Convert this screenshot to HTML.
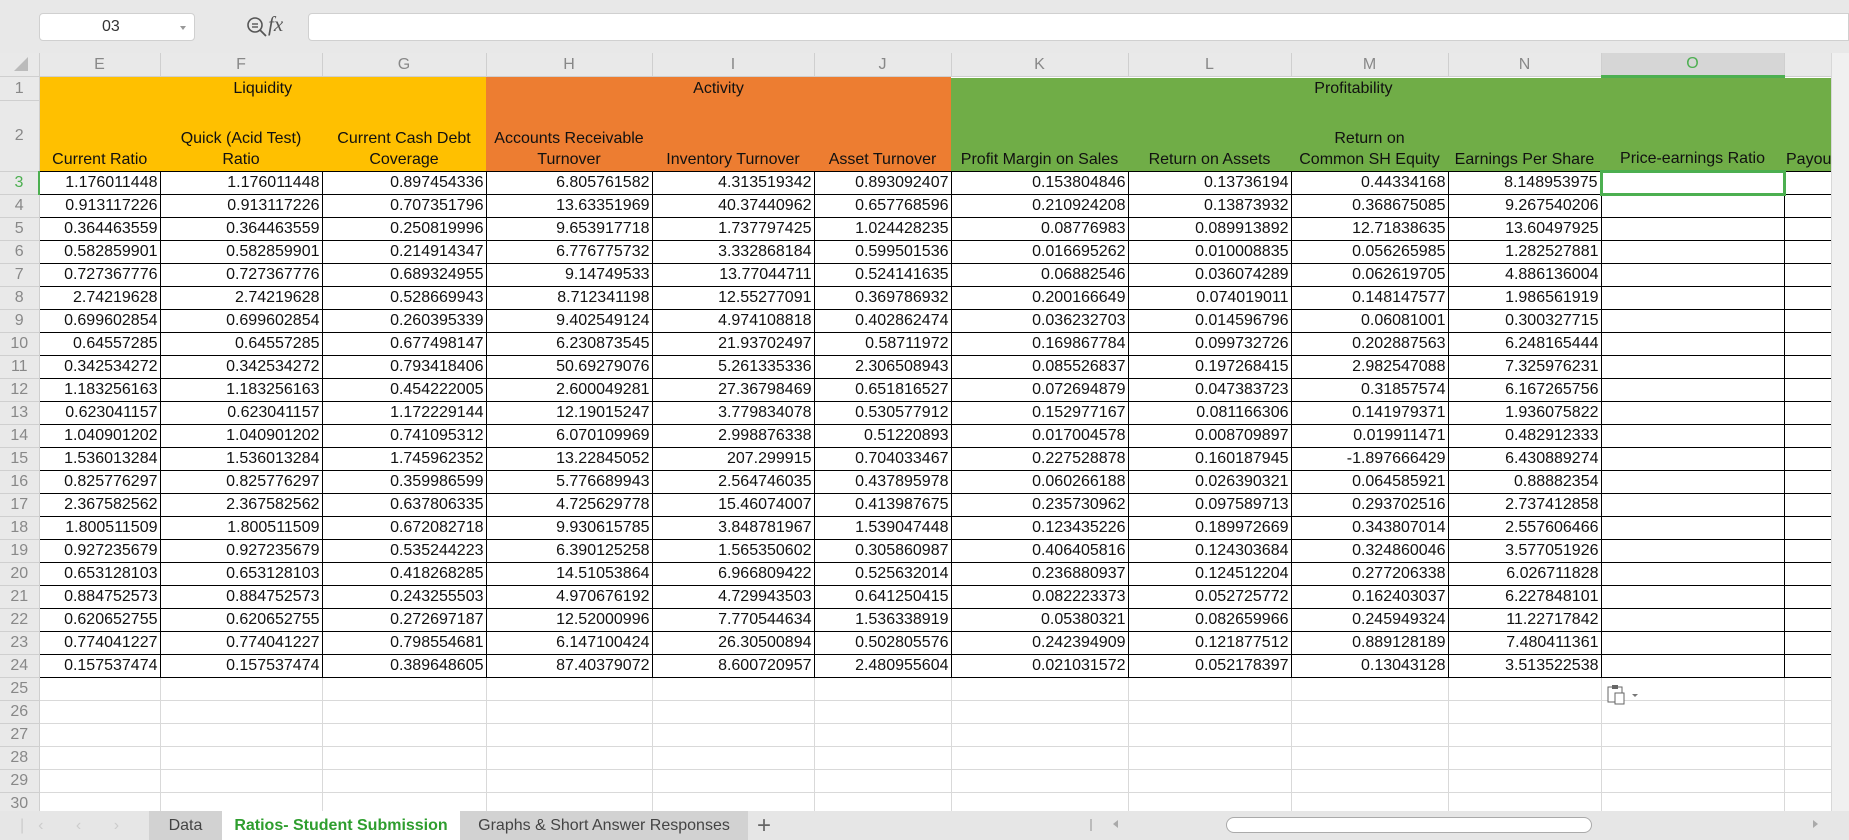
<!DOCTYPE html>
<html><head><meta charset="utf-8">
<style>
*{box-sizing:border-box;margin:0;padding:0}
body{width:1849px;height:840px;overflow:hidden;background:#fff;font-family:"Liberation Sans","Noto Sans CJK SC",sans-serif;position:relative}
.top{position:absolute;left:0;top:0;width:1849px;height:53px;background:#e8e8e8}
.name{position:absolute;left:39px;top:13px;width:156px;height:28px;background:#fff;border:1px solid #d0d0d0;border-radius:4px;font-size:16px;color:#333;line-height:26px;padding-left:62px}
.name:after{content:"";position:absolute;right:8px;top:12px;border:3px solid transparent;border-top:4px solid #999}
.fxin{position:absolute;left:308px;top:13px;width:1541px;height:28px;background:#fff;border:1px solid #d0d0d0;border-radius:4px 0 0 4px}
.fx{position:absolute;left:268px;top:12px;font-family:"Liberation Serif",serif;font-style:italic;font-size:21px;color:#555}
table{position:absolute;left:0;top:53px;border-collapse:collapse;table-layout:fixed}
td{font-size:16px;color:#111;overflow:hidden;white-space:nowrap;padding:0 2px;height:23px;line-height:22px}
tr.ch td{height:23px;background:#e9e9e9;color:#888;text-align:center;font-size:16px;border-right:1px solid #cfcfcf;border-bottom:1px solid #cfcfcf}
td.rh{background:#e9e9e9;color:#888;text-align:center;font-size:16px;border-bottom:1px solid #cfcfcf;border-right:1px solid #cfcfcf;padding:0}
tr.d td.n{text-align:right;border:1px solid #000;letter-spacing:0}
tr.d td.e{border:1px solid #000}
tr.b td.g{border-right:1px solid #d9d9d9;border-bottom:1px solid #d9d9d9}
.y{background:#ffc000}.o{background:#ed7d31}.gr{background:#70ad47}
tr.h2 td{vertical-align:bottom;text-align:center;font-size:16px;line-height:21px;white-space:normal;padding-bottom:1px;border-bottom:1px solid #000}
.tabs{position:absolute;left:0;top:811px;width:1849px;height:29px;background:#e6e6e6}
.tab{position:absolute;top:0;height:29px;font-size:16px;line-height:29px;text-align:center;color:#444}
</style></head><body>
<div class="top">
<div class="name">03</div>
<svg style="position:absolute;left:246px;top:16px" width="22" height="22"><circle cx="9" cy="9" r="7" fill="none" stroke="#555" stroke-width="1.6"/><line x1="14" y1="14" x2="20" y2="20" stroke="#555" stroke-width="1.8"/><line x1="6" y1="8" x2="12" y2="8" stroke="#555" stroke-width="1.4"/><line x1="6" y1="11" x2="12" y2="11" stroke="#555" stroke-width="1.4"/></svg>
<div class="fx">fx</div>
<div class="fxin"></div>
</div>
<table>
<colgroup><col style="width:39px"><col style="width:121px"><col style="width:162px"><col style="width:164px"><col style="width:166px"><col style="width:162px"><col style="width:137px"><col style="width:177px"><col style="width:163px"><col style="width:157px"><col style="width:153px"><col style="width:183px"><col style="width:47px"></colgroup>
<tr class="ch"><td style="position:relative"><svg width="20" height="16" style="position:absolute;left:12px;top:4px"><polygon points="16,0 16,14 2,14" fill="#bbb"/></svg></td><td>E</td><td>F</td><td>G</td><td>H</td><td>I</td><td>J</td><td>K</td><td>L</td><td>M</td><td>N</td><td style="background:#d6d6d6;color:#4caf50;border-bottom:3px solid #4caf50">O</td><td></td></tr>
<tr style="height:24px"><td class="rh">1</td><td class="y" colspan="3" style="text-align:center;font-size:16px">Liquidity</td><td class="o" colspan="3" style="text-align:center;font-size:16px">Activity</td><td class="gr" colspan="6" style="text-align:center;font-size:16px;padding-right:84px">Profitability</td></tr>
<tr class="h2" style="height:71px"><td class="rh" style="vertical-align:middle;text-align:center;border-bottom:1px solid #cfcfcf">2</td><td class="y">Current Ratio</td><td class="y">Quick (Acid Test) Ratio</td><td class="y">Current Cash Debt Coverage</td><td class="o">Accounts Receivable Turnover</td><td class="o">Inventory Turnover</td><td class="o">Asset Turnover</td><td class="gr">Profit Margin on Sales</td><td class="gr">Return on Assets</td><td class="gr">Return on<br>Common SH Equity</td><td class="gr">Earnings Per Share</td><td class="gr">Price-earnings Ratio</td><td class="gr" style="text-align:left">Payout</td></tr>
<tr class="d"><td class="rh" style="color:#4caf50;border-left:0;border-right:2px solid #4caf50">3</td><td class="n">1.176011448</td><td class="n">1.176011448</td><td class="n">0.897454336</td><td class="n">6.805761582</td><td class="n">4.313519342</td><td class="n">0.893092407</td><td class="n">0.153804846</td><td class="n">0.13736194</td><td class="n">0.44334168</td><td class="n">8.148953975</td><td class="e" style="border:3px solid #4caf50"></td><td class="e"></td></tr>
<tr class="d"><td class="rh">4</td><td class="n">0.913117226</td><td class="n">0.913117226</td><td class="n">0.707351796</td><td class="n">13.63351969</td><td class="n">40.37440962</td><td class="n">0.657768596</td><td class="n">0.210924208</td><td class="n">0.13873932</td><td class="n">0.368675085</td><td class="n">9.267540206</td><td class="e"></td><td class="e"></td></tr>
<tr class="d"><td class="rh">5</td><td class="n">0.364463559</td><td class="n">0.364463559</td><td class="n">0.250819996</td><td class="n">9.653917718</td><td class="n">1.737797425</td><td class="n">1.024428235</td><td class="n">0.08776983</td><td class="n">0.089913892</td><td class="n">12.71838635</td><td class="n">13.60497925</td><td class="e"></td><td class="e"></td></tr>
<tr class="d"><td class="rh">6</td><td class="n">0.582859901</td><td class="n">0.582859901</td><td class="n">0.214914347</td><td class="n">6.776775732</td><td class="n">3.332868184</td><td class="n">0.599501536</td><td class="n">0.016695262</td><td class="n">0.010008835</td><td class="n">0.056265985</td><td class="n">1.282527881</td><td class="e"></td><td class="e"></td></tr>
<tr class="d"><td class="rh">7</td><td class="n">0.727367776</td><td class="n">0.727367776</td><td class="n">0.689324955</td><td class="n">9.14749533</td><td class="n">13.77044711</td><td class="n">0.524141635</td><td class="n">0.06882546</td><td class="n">0.036074289</td><td class="n">0.062619705</td><td class="n">4.886136004</td><td class="e"></td><td class="e"></td></tr>
<tr class="d"><td class="rh">8</td><td class="n">2.74219628</td><td class="n">2.74219628</td><td class="n">0.528669943</td><td class="n">8.712341198</td><td class="n">12.55277091</td><td class="n">0.369786932</td><td class="n">0.200166649</td><td class="n">0.074019011</td><td class="n">0.148147577</td><td class="n">1.986561919</td><td class="e"></td><td class="e"></td></tr>
<tr class="d"><td class="rh">9</td><td class="n">0.699602854</td><td class="n">0.699602854</td><td class="n">0.260395339</td><td class="n">9.402549124</td><td class="n">4.974108818</td><td class="n">0.402862474</td><td class="n">0.036232703</td><td class="n">0.014596796</td><td class="n">0.06081001</td><td class="n">0.300327715</td><td class="e"></td><td class="e"></td></tr>
<tr class="d"><td class="rh">10</td><td class="n">0.64557285</td><td class="n">0.64557285</td><td class="n">0.677498147</td><td class="n">6.230873545</td><td class="n">21.93702497</td><td class="n">0.58711972</td><td class="n">0.169867784</td><td class="n">0.099732726</td><td class="n">0.202887563</td><td class="n">6.248165444</td><td class="e"></td><td class="e"></td></tr>
<tr class="d"><td class="rh">11</td><td class="n">0.342534272</td><td class="n">0.342534272</td><td class="n">0.793418406</td><td class="n">50.69279076</td><td class="n">5.261335336</td><td class="n">2.306508943</td><td class="n">0.085526837</td><td class="n">0.197268415</td><td class="n">2.982547088</td><td class="n">7.325976231</td><td class="e"></td><td class="e"></td></tr>
<tr class="d"><td class="rh">12</td><td class="n">1.183256163</td><td class="n">1.183256163</td><td class="n">0.454222005</td><td class="n">2.600049281</td><td class="n">27.36798469</td><td class="n">0.651816527</td><td class="n">0.072694879</td><td class="n">0.047383723</td><td class="n">0.31857574</td><td class="n">6.167265756</td><td class="e"></td><td class="e"></td></tr>
<tr class="d"><td class="rh">13</td><td class="n">0.623041157</td><td class="n">0.623041157</td><td class="n">1.172229144</td><td class="n">12.19015247</td><td class="n">3.779834078</td><td class="n">0.530577912</td><td class="n">0.152977167</td><td class="n">0.081166306</td><td class="n">0.141979371</td><td class="n">1.936075822</td><td class="e"></td><td class="e"></td></tr>
<tr class="d"><td class="rh">14</td><td class="n">1.040901202</td><td class="n">1.040901202</td><td class="n">0.741095312</td><td class="n">6.070109969</td><td class="n">2.998876338</td><td class="n">0.51220893</td><td class="n">0.017004578</td><td class="n">0.008709897</td><td class="n">0.019911471</td><td class="n">0.482912333</td><td class="e"></td><td class="e"></td></tr>
<tr class="d"><td class="rh">15</td><td class="n">1.536013284</td><td class="n">1.536013284</td><td class="n">1.745962352</td><td class="n">13.22845052</td><td class="n">207.299915</td><td class="n">0.704033467</td><td class="n">0.227528878</td><td class="n">0.160187945</td><td class="n">-1.897666429</td><td class="n">6.430889274</td><td class="e"></td><td class="e"></td></tr>
<tr class="d"><td class="rh">16</td><td class="n">0.825776297</td><td class="n">0.825776297</td><td class="n">0.359986599</td><td class="n">5.776689943</td><td class="n">2.564746035</td><td class="n">0.437895978</td><td class="n">0.060266188</td><td class="n">0.026390321</td><td class="n">0.064585921</td><td class="n">0.88882354</td><td class="e"></td><td class="e"></td></tr>
<tr class="d"><td class="rh">17</td><td class="n">2.367582562</td><td class="n">2.367582562</td><td class="n">0.637806335</td><td class="n">4.725629778</td><td class="n">15.46074007</td><td class="n">0.413987675</td><td class="n">0.235730962</td><td class="n">0.097589713</td><td class="n">0.293702516</td><td class="n">2.737412858</td><td class="e"></td><td class="e"></td></tr>
<tr class="d"><td class="rh">18</td><td class="n">1.800511509</td><td class="n">1.800511509</td><td class="n">0.672082718</td><td class="n">9.930615785</td><td class="n">3.848781967</td><td class="n">1.539047448</td><td class="n">0.123435226</td><td class="n">0.189972669</td><td class="n">0.343807014</td><td class="n">2.557606466</td><td class="e"></td><td class="e"></td></tr>
<tr class="d"><td class="rh">19</td><td class="n">0.927235679</td><td class="n">0.927235679</td><td class="n">0.535244223</td><td class="n">6.390125258</td><td class="n">1.565350602</td><td class="n">0.305860987</td><td class="n">0.406405816</td><td class="n">0.124303684</td><td class="n">0.324860046</td><td class="n">3.577051926</td><td class="e"></td><td class="e"></td></tr>
<tr class="d"><td class="rh">20</td><td class="n">0.653128103</td><td class="n">0.653128103</td><td class="n">0.418268285</td><td class="n">14.51053864</td><td class="n">6.966809422</td><td class="n">0.525632014</td><td class="n">0.236880937</td><td class="n">0.124512204</td><td class="n">0.277206338</td><td class="n">6.026711828</td><td class="e"></td><td class="e"></td></tr>
<tr class="d"><td class="rh">21</td><td class="n">0.884752573</td><td class="n">0.884752573</td><td class="n">0.243255503</td><td class="n">4.970676192</td><td class="n">4.729943503</td><td class="n">0.641250415</td><td class="n">0.082223373</td><td class="n">0.052725772</td><td class="n">0.162403037</td><td class="n">6.227848101</td><td class="e"></td><td class="e"></td></tr>
<tr class="d"><td class="rh">22</td><td class="n">0.620652755</td><td class="n">0.620652755</td><td class="n">0.272697187</td><td class="n">12.52000996</td><td class="n">7.770544634</td><td class="n">1.536338919</td><td class="n">0.05380321</td><td class="n">0.082659966</td><td class="n">0.245949324</td><td class="n">11.22717842</td><td class="e"></td><td class="e"></td></tr>
<tr class="d"><td class="rh">23</td><td class="n">0.774041227</td><td class="n">0.774041227</td><td class="n">0.798554681</td><td class="n">6.147100424</td><td class="n">26.30500894</td><td class="n">0.502805576</td><td class="n">0.242394909</td><td class="n">0.121877512</td><td class="n">0.889128189</td><td class="n">7.480411361</td><td class="e"></td><td class="e"></td></tr>
<tr class="d"><td class="rh">24</td><td class="n">0.157537474</td><td class="n">0.157537474</td><td class="n">0.389648605</td><td class="n">87.40379072</td><td class="n">8.600720957</td><td class="n">2.480955604</td><td class="n">0.021031572</td><td class="n">0.052178397</td><td class="n">0.13043128</td><td class="n">3.513522538</td><td class="e"></td><td class="e"></td></tr>
<tr class="b"><td class="rh">25</td><td class="g"></td><td class="g"></td><td class="g"></td><td class="g"></td><td class="g"></td><td class="g"></td><td class="g"></td><td class="g"></td><td class="g"></td><td class="g"></td><td class="g"></td><td class="g"></td></tr>
<tr class="b"><td class="rh">26</td><td class="g"></td><td class="g"></td><td class="g"></td><td class="g"></td><td class="g"></td><td class="g"></td><td class="g"></td><td class="g"></td><td class="g"></td><td class="g"></td><td class="g"></td><td class="g"></td></tr>
<tr class="b"><td class="rh">27</td><td class="g"></td><td class="g"></td><td class="g"></td><td class="g"></td><td class="g"></td><td class="g"></td><td class="g"></td><td class="g"></td><td class="g"></td><td class="g"></td><td class="g"></td><td class="g"></td></tr>
<tr class="b"><td class="rh">28</td><td class="g"></td><td class="g"></td><td class="g"></td><td class="g"></td><td class="g"></td><td class="g"></td><td class="g"></td><td class="g"></td><td class="g"></td><td class="g"></td><td class="g"></td><td class="g"></td></tr>
<tr class="b"><td class="rh">29</td><td class="g"></td><td class="g"></td><td class="g"></td><td class="g"></td><td class="g"></td><td class="g"></td><td class="g"></td><td class="g"></td><td class="g"></td><td class="g"></td><td class="g"></td><td class="g"></td></tr>
<tr class="b"><td class="rh">30</td><td class="g"></td><td class="g"></td><td class="g"></td><td class="g"></td><td class="g"></td><td class="g"></td><td class="g"></td><td class="g"></td><td class="g"></td><td class="g"></td><td class="g"></td><td class="g"></td></tr>
</table>
<div style="position:absolute;left:1831px;top:53px;width:18px;height:758px;background:#f0f0f0;border-left:1px solid #d8d8d8"></div>
<svg style="position:absolute;left:1607px;top:684px" width="34" height="22"><rect x="1" y="3" width="14" height="15" fill="#fff" stroke="#666"/><rect x="5" y="1" width="6" height="4" fill="#666"/><rect x="8" y="9" width="9" height="11" fill="#fff" stroke="#666"/><path d="M25 10l3 3 3-3z" fill="#777"/></svg>
<div class="tabs">
<div style="position:absolute;left:20px;top:6px;color:#ccc;font-size:16px;letter-spacing:14px">|‹ ‹ › ›|</div>
<div class="tab" style="left:149px;width:73px;background:#d2d2d2">Data</div>
<div class="tab" style="left:222px;width:238px;background:#fff;color:#2e9e2e;font-weight:bold">Ratios- Student Submission</div>
<div class="tab" style="left:460px;width:288px;background:#d2d2d2">Graphs &amp; Short Answer Responses</div>
<div class="tab" style="left:752px;width:24px;font-size:24px;color:#666">+</div>
<div style="position:absolute;left:1090px;top:8px;width:2px;height:12px;border-left:1px solid #bbb;border-right:1px solid #bbb"></div>
<div style="position:absolute;left:1109px;top:9px;border:4px solid transparent;border-right:5px solid #aaa;width:0"></div>
<div style="position:absolute;left:1226px;top:6px;width:366px;height:16px;border:1px solid #aaa;border-radius:8px;background:#fff"></div>
<div style="position:absolute;left:1813px;top:9px;border:4px solid transparent;border-left:5px solid #aaa;width:0"></div>
</div>
</body></html>
